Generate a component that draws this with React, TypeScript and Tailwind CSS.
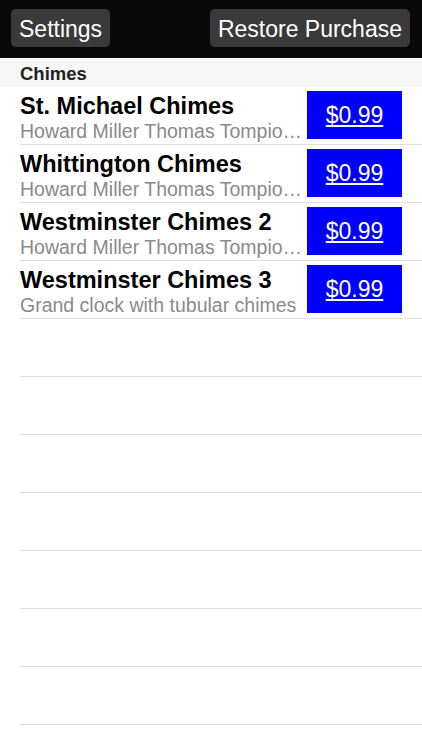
import React from "react";

const items = [
  { title: "St. Michael Chimes", sub: "Howard Miller Thomas Tompio…" },
  { title: "Whittington Chimes", sub: "Howard Miller Thomas Tompio…" },
  { title: "Westminster Chimes 2", sub: "Howard Miller Thomas Tompio…" },
  { title: "Westminster Chimes 3", sub: "Grand clock with tubular chimes" },
];

export default function App() {
  const empty = Array.from({ length: 7 });
  return (
    <div
      className="w-[422px] h-[750px] overflow-hidden bg-white"
      style={{ fontFamily: "'Liberation Sans', Arial, sans-serif" }}
    >
      <div className="h-[58px] bg-[#0a0a0a] flex items-start justify-between pl-[11px] pr-[12px] pt-[9px]">
        <div className="h-[38px] px-[8px] rounded-[5px] bg-[#3a3a3a] text-white text-[23px] leading-[40px]">
          Settings
        </div>
        <div className="h-[38px] px-[8px] rounded-[5px] bg-[#3a3a3a] text-white text-[23px] leading-[40px]">
          Restore Purchase
        </div>
      </div>
      <div className="h-[29px] bg-[#f7f7f7] pl-[20px] text-[18.5px] font-bold text-[#222] leading-[31px]">
        Chimes
      </div>
      <div className="flex flex-col">
        {items.map((it) => (
          <div key={it.title} className="ml-[20px] h-[58px] border-b border-[#e0e0e0] flex items-start">
            <div className="flex-1 min-w-0 pt-[6px]">
              <div className="text-[23.5px] font-bold text-black leading-[27px] whitespace-nowrap">{it.title}</div>
              <div className="text-[19.5px] text-[#8a8a8a] leading-[22px] whitespace-nowrap">
                {it.sub}
              </div>
            </div>
            <div className="mt-[4px] mr-[20px] w-[95px] h-[48px] bg-[#0000ff] flex items-center justify-center text-white text-[23px] underline shrink-0">
              $0.99
            </div>
          </div>
        ))}
        {empty.map((_, i) => (
          <div key={i} className="ml-[20px] h-[58px] border-b border-[#e0e0e0]" />
        ))}
      </div>
    </div>
  );
}
